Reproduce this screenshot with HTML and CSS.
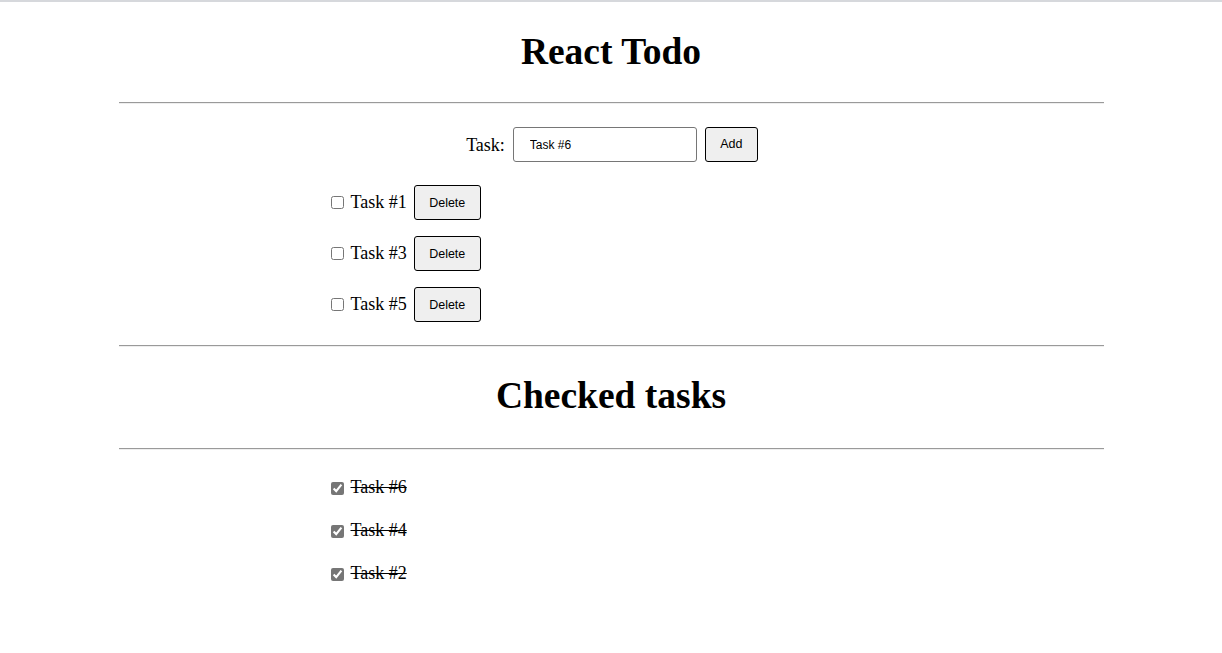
FILE: index.html
```html
<!DOCTYPE html>
<html>
<head>
<meta charset="utf-8">
<title>React Todo</title>
<link rel="stylesheet" href="styles.css">
</head>
<body>
<div class="topbar"></div>
<main class="page">
  <h1 class="title">React Todo</h1>
  <hr class="rule">
  <form class="add-form">
    <label class="add-label" for="task">Task:</label>
    <input class="add-input" id="task" type="text" value="Task #6">
    <button class="btn btn-add" type="button">Add</button>
  </form>
  <ul class="list">
    <li class="item"><input class="check" type="checkbox"><span class="item-text">Task #1</span><button class="btn btn-del" type="button">Delete</button></li>
    <li class="item"><input class="check" type="checkbox"><span class="item-text">Task #3</span><button class="btn btn-del" type="button">Delete</button></li>
    <li class="item"><input class="check" type="checkbox"><span class="item-text">Task #5</span><button class="btn btn-del" type="button">Delete</button></li>
  </ul>
  <hr class="rule rule-after-list">
  <h1 class="title title-2">Checked tasks</h1>
  <hr class="rule rule-after-title-2">
  <ul class="list list-done">
    <li class="item item-done"><input class="check check-done" type="checkbox" checked><span class="item-text done">Task #6</span></li>
    <li class="item item-done"><input class="check check-done" type="checkbox" checked><span class="item-text done">Task #4</span></li>
    <li class="item item-done"><input class="check check-done" type="checkbox" checked><span class="item-text done">Task #2</span></li>
  </ul>
</main>
</body>
</html>
```

FILE: styles.css
```css
html, body {
  margin: 0;
  padding: 0;
  background: #ffffff;
}
body {
  font-family: "Liberation Serif", "Times New Roman", serif;
  color: #000;
}
.topbar {
  height: 2px;
  background: #d6d8dc;
}
.page {
  width: 985px;
  margin: 0 auto;
  display: flex;
  flex-direction: column;
}
.title {
  margin: 29px 0 0;
  font-size: 37.5px;
  line-height: 42px;
  font-weight: bold;
  text-align: center;
}
.title-2 {
  margin-top: 28px;
}
.rule {
  margin: 29px 0 0;
  height: 0;
  border: 0;
  border-top: 1px solid #9a9a9a;
  border-bottom: 1px solid #eeeeee;
}
.rule-after-list {
  margin-top: 23px;
}
.rule-after-title-2 {
  margin-top: 31px;
}
.add-form {
  margin: 23px 0 0;
  padding-left: 2px;
  display: flex;
  justify-content: center;
  align-items: center;
}
.add-label {
  font-size: 18px;
  margin-right: 8px;
  margin-top: 2px;
}
.add-input {
  box-sizing: border-box;
  width: 184px;
  height: 35px;
  margin: 0 8px 0 0;
  padding: 0 16px;
  border: 1px solid #767676;
  border-radius: 3px;
  font-family: "Liberation Sans", Arial, sans-serif;
  font-size: 12px;
  color: #000;
  outline: none;
}
.btn {
  box-sizing: border-box;
  height: 35px;
  margin: 0;
  padding: 0;
  background: #efefef;
  border: 1px solid #000;
  border-radius: 3px;
  font-family: "Liberation Sans", Arial, sans-serif;
  font-size: 12.5px;
  color: #000;
}
.btn-add {
  width: 53px;
  margin-top: -1px;
}
.btn-del {
  width: 67px;
  margin-left: 7px;
}
.list {
  list-style: none;
  margin: 23px 0 0;
  padding: 0 0 0 208px;
  display: flex;
  flex-direction: column;
  gap: 16px;
}
.item {
  display: flex;
  align-items: center;
  height: 35px;
}
.check {
  width: 13px;
  height: 13px;
  margin: 0 7px 0 4px;
}
.item-text {
  font-size: 18px;
  line-height: 22px;
  margin-top: -2px;
}
.list-done {
  margin-top: 27px;
  gap: 21px;
}
.item-done {
  height: 22px;
}
.check-done {
  accent-color: #767676;
}
.done {
  text-decoration: line-through;
}
```
